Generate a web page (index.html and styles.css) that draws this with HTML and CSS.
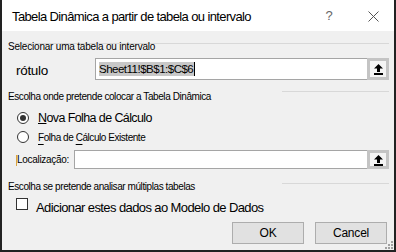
FILE: index.html
```html
<!DOCTYPE html>
<html lang="pt">
<head>
<meta charset="utf-8">
<link rel="stylesheet" href="styles.css">
</head>
<body>
<div class="window">
  <div class="titlebar">
    <span class="title">Tabela Dinâmica a partir de tabela ou intervalo</span>
    <span class="help">?</span>
    <span class="close"><svg width="11" height="11" viewBox="0 0 11 11"><path d="M0.5 0.5 L10.5 10.5 M10.5 0.5 L0.5 10.5" stroke="#555" stroke-width="1" fill="none"/></svg></span>
  </div>
  <div class="body">
    <div class="rule-full"></div>
    <div class="group-head first"><span class="head-text">Selecionar uma tabela ou intervalo</span></div>
    <div class="range-row">
      <span class="range-label">rótulo</span>
      <div class="refedit">
        <div class="ref-text"><span class="sel">Sheet11!$B$1:$C$6</span><span class="caret"></span></div>
        <div class="ref-btn"><svg width="11" height="12" viewBox="0 0 11 12"><path d="M5.5 1 L10 5.5 L7 5.5 L7 9 L4 9 L4 5.5 L1 5.5 Z" fill="#000"/><rect x="1" y="10" width="9" height="2" fill="#000"/></svg></div>
      </div>
    </div>

    <div class="group-head second"><span class="head-text">Escolha onde pretende colocar a Tabela Dinâmica</span><span class="rule"></span></div>
    <div class="radio-row big">
      <span class="radio checked"></span>
      <span class="radio-text"><u>N</u>ova Folha de Cálculo</span>
    </div>
    <div class="radio-row small">
      <span class="radio"></span>
      <span class="radio-text"><span class="acc">F</span>olha de <span class="acc">C</span>álculo Existente</span>
    </div>
    <div class="loc-row">
      <span class="loc-label"><span class="mark"></span>Localização:</span>
      <div class="refedit loc">
        <div class="ref-text"></div>
        <div class="ref-btn"><svg width="11" height="12" viewBox="0 0 11 12"><path d="M5.5 1 L10 5.5 L7 5.5 L7 9 L4 9 L4 5.5 L1 5.5 Z" fill="#000"/><rect x="1" y="10" width="9" height="2" fill="#000"/></svg></div>
      </div>
    </div>

    <div class="group-head third"><span class="head-text">Escolha se pretende analisar múltiplas tabelas</span><span class="rule"></span></div>
    <div class="check-row">
      <span class="checkbox"></span>
      <span class="check-text">Adicionar estes dados ao Modelo de Dados</span>
    </div>
    <div class="buttons">
      <button class="btn">OK</button>
      <button class="btn">Cancel</button>
    </div>
    <div class="grip">
      <svg width="8" height="8" viewBox="0 0 8 8"><g fill="#a0a0a0"><rect x="6" y="0" width="2" height="2"/><rect x="3" y="3" width="2" height="2"/><rect x="6" y="3" width="2" height="2"/><rect x="0" y="6" width="2" height="2"/><rect x="3" y="6" width="2" height="2"/><rect x="6" y="6" width="2" height="2"/></g></svg>
    </div>
  </div>
</div>
</body>
</html>
```

FILE: styles.css
```css
* { box-sizing: border-box; }
html, body { margin: 0; padding: 0; }
body {
  width: 396px;
  height: 252px;
  overflow: hidden;
  background: #ffffff;
  font-family: "Liberation Sans", Arial, sans-serif;
  color: #000;
}
.window {
  width: 396px;
  height: 252px;
  border-left: 2px solid #222;
  border-right: 2px solid #222;
  border-bottom: 2px solid #222;
  display: flex;
  flex-direction: column;
}
.titlebar {
  height: 31px;
  background: #fff;
  display: flex;
  align-items: center;
  padding-left: 10px;
}
.title {
  font-size: 13px;
  letter-spacing: -0.62px;
  flex: 1;
  padding-top: 1px;
}
.help {
  font-size: 13px;
  color: #666;
  width: 12px;
  text-align: center;
  margin-right: 33px;
}
.close {
  width: 11px;
  margin-right: 15px;
  display: flex;
  align-items: center;
  padding-top: 1px;
}
.body {
  flex: 1;
  background: #f0f0f0;
  position: relative;
  padding: 12px 5px 0 6px;
}
.rule-full {
  height: 1px;
  background: #d8d8d8;
}
.group-head {
  display: flex;
  align-items: flex-start;
  font-size: 10px;
  line-height: 12px;
  letter-spacing: -0.42px;
  color: #000;
}
.head-text { flex: 1; }
.group-head .rule {
  width: 107px;
  height: 1px;
  background: #d8d8d8;
}
.group-head.first { margin-top: -3px; letter-spacing: -0.2px; }
.group-head.second { margin-top: 11px; }
.group-head.third { margin-top: 12px; }
.group-head.third .rule { margin-top: 2px; }
.range-row {
  display: flex;
  align-items: center;
  margin-top: 5px;
  height: 22px;
}
.range-label {
  font-size: 13.5px;
  letter-spacing: -0.3px;
  width: 87px;
  padding-left: 8px;
  padding-top: 3px;
}
.refedit {
  flex: 1;
  height: 22px;
  border: 1px solid #a5a5a5;
  background: #fff;
  display: flex;
}
.ref-text {
  flex: 1;
  display: flex;
  align-items: center;
  padding-left: 3px;
  font-size: 11.5px;
}
.sel {
  background: #c8c8c8;
  line-height: 14px;
  letter-spacing: -0.5px;
  padding-right: 1px;
}
.caret {
  width: 1px;
  height: 14px;
  background: #000;
}
.ref-btn {
  width: 22px;
  margin: -1px -1px -1px 0;
  border: 3px solid #c4c4c4;
  background: #f4f4f4;
  display: flex;
  align-items: center;
  justify-content: center;
}
.radio-row {
  display: flex;
  align-items: center;
}
.radio {
  width: 12px;
  height: 12px;
  border: 1px solid #333;
  border-radius: 50%;
  background: #fff;
  margin-left: 9px;
  margin-right: 9px;
  position: relative;
  flex-shrink: 0;
}
.radio.checked::after {
  content: "";
  position: absolute;
  left: 2px; top: 2px;
  width: 6px; height: 6px;
  border-radius: 50%;
  background: #333;
}
.radio-row.big { height: 20px; margin-top: 5px; }
.radio-row.big .radio-text { font-size: 12.5px; letter-spacing: -0.6px; }
.radio-row.small { height: 16px; margin-top: 1px; }
.radio-row.small .radio-text { font-size: 10px; letter-spacing: -0.45px; }
.acc { text-decoration: underline; text-underline-offset: 3px; }
.loc-row {
  display: flex;
  align-items: center;
  margin-top: 5px;
  height: 19px;
}
.loc-label {
  width: 66px;
  padding-left: 9px;
  font-size: 10px;
  letter-spacing: -0.3px;
  position: relative;
}
.mark {
  position: absolute;
  left: 8px; top: 1px;
  width: 1px; height: 11px;
  background: #d9a441;
}
.refedit.loc { height: 19px; }
.check-row {
  display: flex;
  align-items: center;
  margin-top: 6px;
  height: 16px;
}
.checkbox {
  width: 12px;
  height: 12px;
  border: 1px solid #333;
  background: #fff;
  margin-left: 8px;
  margin-right: 8px;
  margin-top: -6px;
  flex-shrink: 0;
}
.check-text { font-size: 13px; letter-spacing: -0.6px; padding-top: 1px; }
.buttons {
  display: flex;
  justify-content: flex-end;
  gap: 11px;
  margin-top: 7px;
  padding-right: 2px;
}
.btn {
  width: 72px;
  height: 22px;
  background: #e1e1e1;
  border: 1px solid #adadad;
  font-family: "Liberation Sans", Arial, sans-serif;
  font-size: 12px;
  letter-spacing: -0.2px;
  color: #000;
  padding: 0;
}
.grip {
  position: absolute;
  right: 1px;
  bottom: 1px;
  width: 8px;
  height: 8px;
  display: flex;
}
```
